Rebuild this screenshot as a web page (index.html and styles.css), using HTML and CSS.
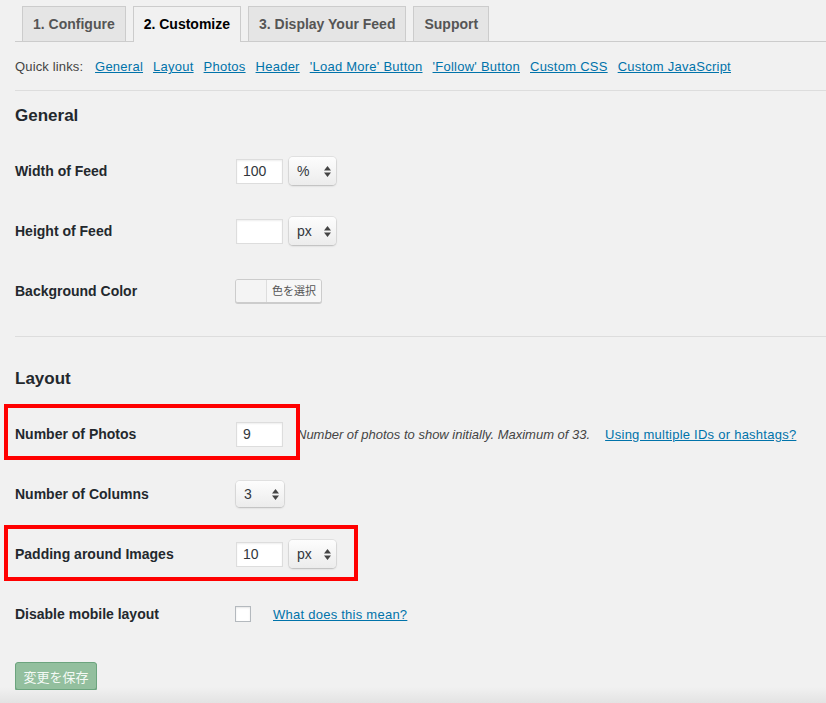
FILE: index.html
```html
<!DOCTYPE html>
<html lang="en">
<head>
<meta charset="utf-8">
<title>Customize</title>
<link rel="stylesheet" href="styles.css">
</head>
<body>
<div class="page">
  <nav class="tabs">
    <a class="tab">1. Configure</a>
    <a class="tab active">2. Customize</a>
    <a class="tab">3. Display Your Feed</a>
    <a class="tab">Support</a>
  </nav>
  <p class="quick">Quick links: <a href="#">General</a><a href="#">Layout</a><a href="#">Photos</a><a href="#">Header</a><a href="#">'Load More' Button</a><a href="#">'Follow' Button</a><a href="#">Custom CSS</a><a href="#">Custom JavaScript</a></p>
  <hr class="sep first">
  <h3 class="heading">General</h3>
  <div class="row">
    <div class="label">Width of Feed</div>
    <div class="field"><span class="input">100</span><span class="select">%<svg class="arr" viewBox="0 0 7 11" width="7" height="11"><path d="M0 4.5 3.5 0 7 4.5Z M0 6.5 3.5 11 7 6.5Z" fill="#444"/></svg></span></div>
  </div>
  <div class="row">
    <div class="label">Height of Feed</div>
    <div class="field"><span class="input"></span><span class="select">px<svg class="arr" viewBox="0 0 7 11" width="7" height="11"><path d="M0 4.5 3.5 0 7 4.5Z M0 6.5 3.5 11 7 6.5Z" fill="#444"/></svg></span></div>
  </div>
  <div class="row">
    <div class="label">Background Color</div>
    <div class="field"><span class="picker"><span class="swatch"></span><span class="pick-label">色を選択</span></span></div>
  </div>
  <hr class="sep second">
  <h3 class="heading">Layout</h3>
  <div class="row">
    <div class="label">Number of Photos</div>
    <div class="field"><span class="input">9</span><span class="desc">Number of photos to show initially. Maximum of 33.</span><a class="help" href="#">Using multiple IDs or hashtags?</a></div>
    <div class="mark mark-a"></div>
  </div>
  <div class="row">
    <div class="label">Number of Columns</div>
    <div class="field"><span class="select solo">3<svg class="arr" viewBox="0 0 7 11" width="7" height="11"><path d="M0 4.5 3.5 0 7 4.5Z M0 6.5 3.5 11 7 6.5Z" fill="#444"/></svg></span></div>
  </div>
  <div class="row">
    <div class="label">Padding around Images</div>
    <div class="field"><span class="input">10</span><span class="select">px<svg class="arr" viewBox="0 0 7 11" width="7" height="11"><path d="M0 4.5 3.5 0 7 4.5Z M0 6.5 3.5 11 7 6.5Z" fill="#444"/></svg></span></div>
    <div class="mark mark-b"></div>
  </div>
  <div class="row">
    <div class="label">Disable mobile layout</div>
    <div class="field"><span class="check"></span><a class="help2" href="#">What does this mean?</a></div>
  </div>
  <button class="save">変更を保存</button>
</div>
</body>
</html>
```
FILE: styles.css
```css
html {
  min-height: 100%;
  background: linear-gradient(#f1f1f1 calc(100% - 16px), #e3e3e3);
}
body {
  margin: 0;
  font-family: "Liberation Sans", Arial, "Noto Sans CJK JP", sans-serif;
  color: #444;
}
.page {
  padding-left: 15px;
}
.tabs {
  display: flex;
  gap: 7px;
  padding: 6px 0 0 7px;
  border-bottom: 1px solid #ccc;
}
.tab {
  display: block;
  padding: 5px 10px;
  font-size: 14px;
  font-weight: 700;
  line-height: 24px;
  color: #555;
  background: #e5e5e5;
  border: 1px solid #ccc;
  border-bottom: none;
  text-decoration: none;
}
.tab.active {
  color: #000;
  background: #f1f1f1;
  margin-bottom: -1px;
  padding-bottom: 6px;
}
.quick {
  margin: 15px 0 0;
  font-size: 13px;
  line-height: 19px;
  color: #444;
  letter-spacing: 0.15px;
}
.quick a {
  color: #0073aa;
  text-decoration: underline;
  margin-left: 10px;
  letter-spacing: 0.25px;
}
.quick a:first-child {
  margin-left: 8px;
}
.sep {
  border: none;
  border-top: 1px solid #ddd;
  margin: 0;
  height: 0;
}
.sep.first {
  margin-top: 14px;
}
.sep.second {
  margin-top: 15px;
}
.heading {
  margin: 0;
  font-size: 17px;
  line-height: 22px;
  font-weight: 700;
  color: #23282d;
}
.sep.first + .heading {
  margin-top: 14px;
}
.sep.second + .heading {
  margin-top: 31px;
}
.heading + .row {
  margin-top: 14px;
}
.row {
  position: relative;
  display: flex;
  align-items: center;
  height: 60px;
}
.label {
  width: 221px;
  flex: none;
  font-size: 14px;
  font-weight: 700;
  color: #23282d;
}
.field {
  display: flex;
  align-items: center;
}
.input {
  box-sizing: border-box;
  width: 47px;
  height: 25px;
  background: #fff;
  border: 1px solid #ddd;
  box-shadow: inset 0 1px 2px rgba(0, 0, 0, 0.07);
  font-size: 14px;
  line-height: 23px;
  padding-left: 6px;
  color: #32373c;
}
.select {
  box-sizing: border-box;
  display: flex;
  align-items: center;
  justify-content: space-between;
  width: 47px;
  height: 28px;
  margin-left: 6px;
  padding: 0 5px 0 8px;
  border-radius: 4px;
  background: linear-gradient(#fdfdfd, #ececec);
  box-shadow: 0 0 0 1px rgba(0, 0, 0, 0.06), 0 1px 2px rgba(0, 0, 0, 0.18);
  font-size: 14px;
  color: #32373c;
}
.select.solo {
  margin-left: 0;
  width: 48px;
  height: 26px;
}
.arr {
  display: block;
}
.picker {
  display: flex;
  box-sizing: border-box;
  height: 24px;
  margin-left: -1px;
  border: 1px solid #ccc;
  border-radius: 3px;
  background: #f7f7f7;
  box-shadow: 0 1px 0 #ccc;
  overflow: hidden;
}
.swatch {
  width: 30px;
  background: #f4f4f4;
  border-right: 1px solid #ddd;
}
.pick-label {
  padding: 0 5px;
  font-size: 11px;
  line-height: 22px;
  color: #555;
  background: #f7f7f7;
}
.desc {
  margin-left: 14px;
  font-size: 13px;
  font-style: italic;
  color: #444;
}
.help {
  margin-left: 15px;
  font-size: 13px;
  color: #0073aa;
  letter-spacing: 0.25px;
}
.check {
  box-sizing: border-box;
  width: 16px;
  height: 16px;
  margin-left: -1px;
  background: #fff;
  border: 1px solid #b4b9be;
  box-shadow: inset 0 1px 2px rgba(0, 0, 0, 0.1);
}
.help2 {
  margin-left: 22px;
  font-size: 13px;
  color: #0073aa;
  letter-spacing: 0.25px;
}
.mark {
  position: absolute;
  left: -11px;
  top: 0;
  height: 56px;
  box-sizing: border-box;
  border: 4px solid #ff0000;
}
.mark-a {
  width: 296px;
}
.mark-b {
  top: 1px;
  width: 354px;
}
.save {
  display: block;
  margin-top: 18px;
  box-sizing: border-box;
  width: 82px;
  height: 28px;
  padding: 0;
  background: #93bf9e;
  border: 1px solid #6ca47e;
  border-radius: 3px;
  box-shadow: 0 1px 0 #6ca47e;
  color: rgba(255, 255, 255, 0.92);
  font-family: "Noto Sans CJK JP", sans-serif;
  font-size: 13px;
}
```
